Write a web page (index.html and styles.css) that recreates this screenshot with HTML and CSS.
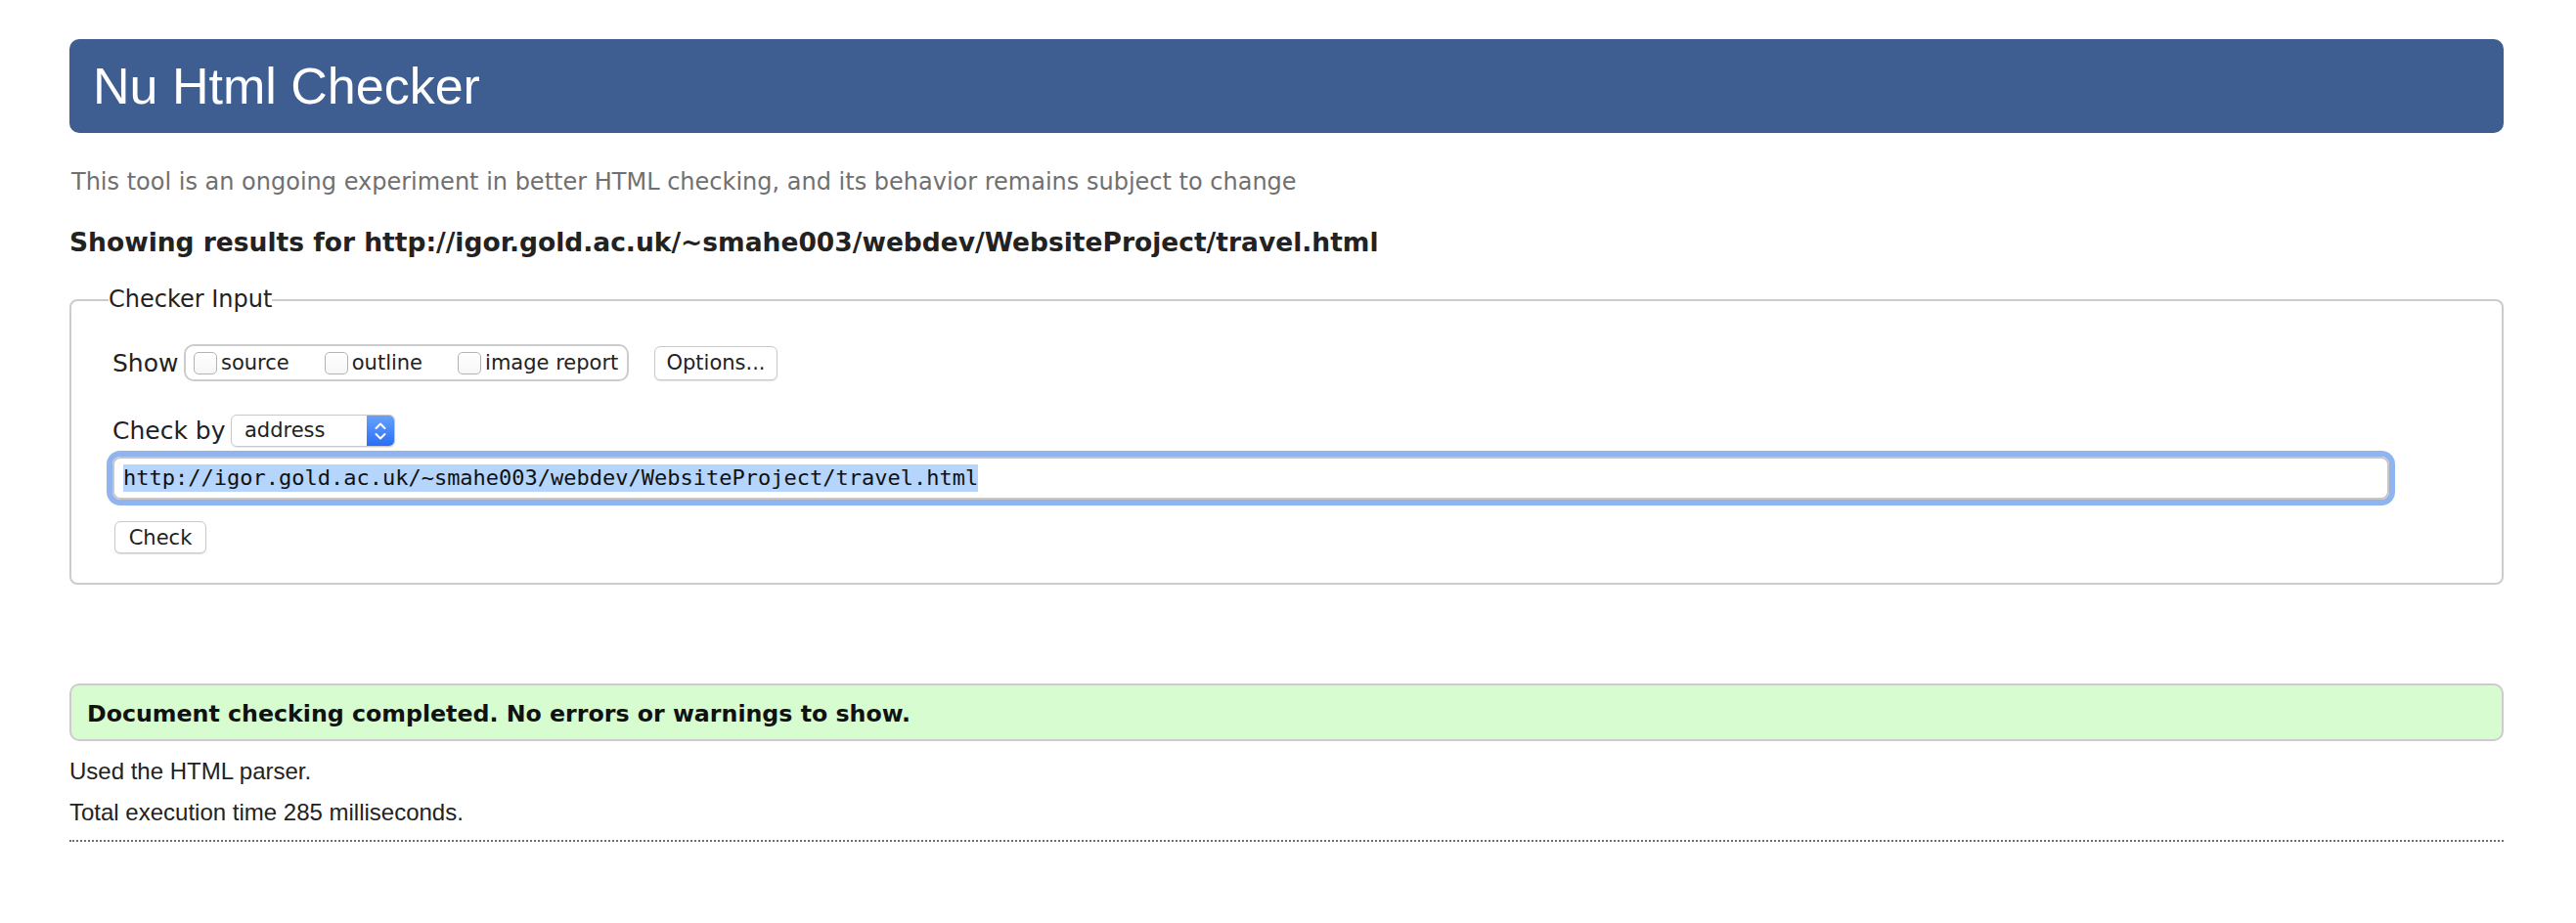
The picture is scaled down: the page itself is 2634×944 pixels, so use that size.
FILE: index.html
```html
<!DOCTYPE html>
<html lang="en">
<head>
<meta charset="utf-8">
<title>Nu Html Checker</title>
<link rel="stylesheet" href="styles.css">
</head>
<body>
<div class="page">
  <h1 class="banner">Nu Html Checker</h1>
  <p class="about">This tool is an ongoing experiment in better HTML checking, and its behavior remains subject to change</p>
  <h2 class="results-for">Showing results for http://igor.gold.ac.uk/~smahe003/webdev/WebsiteProject/travel.html</h2>

  <fieldset class="checker">
    <legend class="legend">Checker Input</legend>
    <div class="row show-row">
      <span class="label show-label">Show</span>
      <div class="show-group">
        <span class="opt"><span class="box"></span><span class="opt-text">source</span></span>
        <span class="opt"><span class="box"></span><span class="opt-text">outline</span></span>
        <span class="opt"><span class="box"></span><span class="opt-text">image report</span></span>
      </div>
      <span class="btn options-btn">Options...</span>
    </div>
    <div class="row by-row">
      <span class="label by-label">Check by</span>
      <div class="select">
        <span class="select-text">address</span>
        <span class="select-arrows">
          <svg width="14" height="22" viewBox="0 0 14 22"><path d="M2.5 8 L7 3.5 L11.5 8" fill="none" stroke="#fff" stroke-width="2" stroke-linecap="round" stroke-linejoin="round"/><path d="M2.5 14 L7 18.5 L11.5 14" fill="none" stroke="#fff" stroke-width="2" stroke-linecap="round" stroke-linejoin="round"/></svg>
        </span>
      </div>
    </div>
    <div class="urlbox"><span class="sel">http://igor.gold.ac.uk/~smahe003/webdev/WebsiteProject/travel.html</span></div>
    <div class="row check-row">
      <span class="btn check-btn">Check</span>
    </div>
  </fieldset>

  <div class="success">Document checking completed. No errors or warnings to show.</div>
  <p class="info first">Used the HTML parser.</p>
  <p class="info">Total execution time 285 milliseconds.</p>
  <hr class="dots">
</div>
</body>
</html>
```

FILE: styles.css
```css
html, body {
  margin: 0;
  padding: 0;
  background: #ffffff;
}

.page {
  margin: 0 74px 0 71px;
  padding-top: 40px;
  font-family: "DejaVu Sans", "Liberation Sans", sans-serif;
  color: #222222;
}

.banner {
  margin: 0;
  height: 96px;
  box-sizing: border-box;
  padding: 18px 24px;
  background: #3e5e92;
  border-radius: 10px;
  color: #ffffff;
  font-family: "Liberation Sans", Arial, sans-serif;
  font-weight: normal;
  font-size: 52px;
  line-height: 60px;
}

.about {
  margin: 36px 0 0 2px;
  font-size: 24px;
  line-height: 29px;
  color: #707070;
}

.results-for {
  margin: 32px 0 0 0;
  font-size: 26.5px;
  line-height: 29px;
  font-weight: 700;
  color: #222222;
}

.checker {
  margin: 30px 0 0 0;
  padding: 31px 20px 30px 42px;
  border: 2px solid #cccccc;
  border-radius: 8px;
  min-width: 0;
}

.legend {
  padding: 0;
  margin-left: -4px;
  font-size: 24px;
  line-height: 29px;
  color: #222222;
}

.row {
  display: flex;
  align-items: center;
}

.label {
  font-size: 25px;
  color: #222222;
}

.show-row {
  height: 38px;
}

.show-label {
  width: 73px;
}

.show-group {
  display: flex;
  align-items: center;
  height: 38px;
  box-sizing: border-box;
  width: 455px;
  border: 2px solid #cccccc;
  border-radius: 10px;
  padding-left: 8px;
  gap: 36px;
}

.opt {
  display: flex;
  align-items: center;
}

.box {
  width: 22px;
  height: 21px;
  border: 1.5px solid #b3b3b3;
  border-radius: 5px;
  background: linear-gradient(#ffffff, #f6f6f6);
  margin-right: 4px;
}

.opt-text {
  font-size: 21px;
  color: #222222;
}

.btn {
  display: inline-flex;
  align-items: center;
  justify-content: center;
  box-sizing: border-box;
  background: #ffffff;
  border: 1px solid #c9c9c9;
  border-radius: 6px;
  box-shadow: 0 1px 1px rgba(0, 0, 0, 0.12);
  font-size: 21px;
  color: #222222;
}

.options-btn {
  margin-left: 26px;
  width: 126px;
  height: 35px;
}

.by-row {
  margin-top: 34px;
  height: 33px;
}

.by-label {
  width: 121px;
}

.select {
  display: flex;
  width: 168px;
  height: 33px;
  box-sizing: border-box;
  border: 1px solid #c8c8c8;
  border-radius: 6px;
  overflow: hidden;
  box-shadow: 0 1px 1px rgba(0, 0, 0, 0.08);
}

.select-text {
  flex: 1;
  padding-left: 13px;
  font-size: 21px;
  line-height: 31px;
  color: #222222;
}

.select-arrows {
  width: 28px;
  display: flex;
  align-items: center;
  justify-content: center;
  background: linear-gradient(#66a3f9, #2a6ef6);
}

.urlbox {
  margin-top: 10px;
  width: 2328px;
  height: 44px;
  box-sizing: border-box;
  border: 2px solid #c6c6c6;
  border-radius: 8px;
  box-shadow: 0 0 0 6px #90b4f0;
  padding: 6px 0 0 9px;
  font-family: "DejaVu Sans Mono", "Liberation Mono", monospace;
  font-size: 22px;
  line-height: 28px;
  color: #111111;
}

.sel {
  background: #b5d5fc;
  display: inline-block;
  height: 28px;
}

.check-row {
  margin-top: 22px;
  padding-left: 2px;
}

.check-btn {
  width: 94px;
  height: 33px;
}

.success {
  margin-top: 101px;
  box-sizing: border-box;
  height: 59px;
  padding: 15px 16px 0 16px;
  border: 2px solid #cccccc;
  border-radius: 10px;
  background: #d6fcd0;
  font-family: "DejaVu Sans", "Liberation Sans", sans-serif;
  font-weight: bold;
  font-size: 23.7px;
  line-height: 28px;
  color: #111111;
}

.info {
  margin: 14px 0 0 0;
  font-family: "Liberation Sans", Arial, sans-serif;
  font-size: 24px;
  line-height: 28px;
  color: #222222;
}

.info.first {
  margin-top: 17px;
}

.dots {
  margin: 14px 0 0 0;
  border: 0;
  border-top: 2px dotted #6f6f6f;
  height: 0;
}
```
